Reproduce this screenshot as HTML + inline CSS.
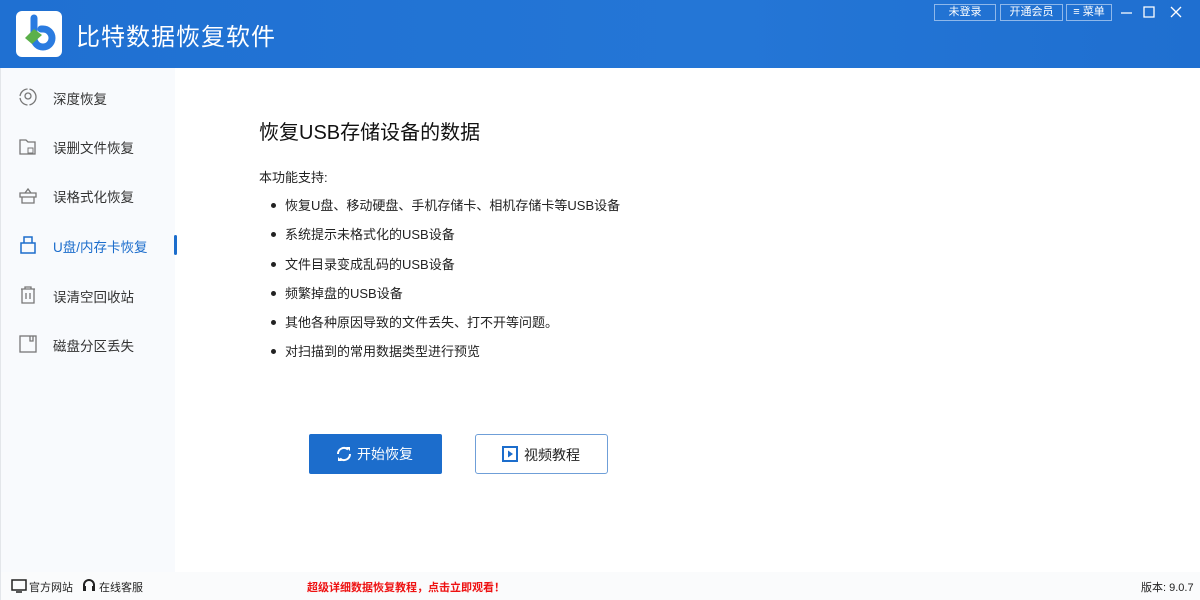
<!DOCTYPE html>
<html><head><meta charset="utf-8"><style>
*{margin:0;padding:0;box-sizing:border-box}
body{width:1200px;height:600px;overflow:hidden;background:#fff;font-family:"Liberation Sans","Noto Sans CJK SC",sans-serif;position:relative;color:#222}
.hdr{position:absolute;left:0;top:0;width:1200px;height:68px;background:linear-gradient(90deg,#1f70d2,#2476d6 60%,#1f6fd0)}
.logo{position:absolute;left:16px;top:11px;width:46px;height:46px;background:#fff;border-radius:6px}
.title{position:absolute;left:76px;top:17px;color:#fff;font-size:24px;letter-spacing:1px}
.tb{position:absolute;top:4px;height:17px;border:1px solid #8fb8ea;color:#fff;font-size:11px;line-height:15px;text-align:center}
.side{position:absolute;left:0;top:68px;width:175px;height:504px;background:#f8fafd;border-left:1px solid #e3e6ea}
.it{position:absolute;left:52px;font-size:13.5px;color:#333}
.ic{position:absolute;left:17px;width:20px;height:20px}
.bot{position:absolute;left:0;top:572px;width:1200px;height:28px;background:#fafbfc;border-left:1px solid #e3e6ea;font-size:11px;color:#222}
h1{position:absolute;left:259px;top:116px;font-size:20px;font-weight:normal;color:#111}
.sub{position:absolute;left:259px;top:167px;font-size:13px;color:#222}
.li{position:absolute;left:271px;font-size:13px;color:#222}
.li:before{content:"";position:absolute;left:0;top:8px;width:5px;height:5px;border-radius:50%;background:#222}
.li span{margin-left:14px}
.b1{position:absolute;left:309px;top:434px;width:133px;height:40px;background:#1c6dcc;color:#fff;font-size:14px;border-radius:2px}
.b2{position:absolute;left:475px;top:434px;width:133px;height:40px;border:1px solid #6f9fd8;border-radius:3px;background:#fff;font-size:14px;color:#222}
</style></head><body>
<div class="hdr">
<div class="logo"><svg width="46" height="46"><path d="M18 7v20a9 9 0 1 0 9-9h-2" fill="none" stroke="#2a7be0" stroke-width="7" stroke-linecap="round"/><path d="M9 27l9-9 8 6-10 9z" fill="#5bb04a"/></svg></div>
<div class="title">比特数据恢复软件</div>
<div class="tb" style="left:934px;width:62px">未登录</div>
<div class="tb" style="left:1000px;width:63px">开通会员</div>
<div class="tb" style="left:1066px;width:46px">≡ 菜单</div>
<svg style="position:absolute;left:1118px;top:5px" width="80" height="16"><path d="M3 8h11M26 2h10v10h-10zM53 2l10 10M63 2l-10 10" stroke="#fff" stroke-width="1.3" fill="none"/></svg>
</div>
<div class="side">
<svg class="ic" style="top:19px" viewBox="0 0 20 20"><circle cx="10" cy="10" r="8" fill="none" stroke="#777" stroke-width="1.3" stroke-dasharray="11 2"/><circle cx="10" cy="9" r="3" fill="none" stroke="#777" stroke-width="1.3"/></svg>
<div class="it" style="top:20px">深度恢复</div>
<svg class="ic" style="top:69px" viewBox="0 0 20 20"><path d="M2 3h6l2 2h7v12H2z" fill="none" stroke="#777" stroke-width="1.3"/><rect x="10" y="11" width="5" height="5" fill="none" stroke="#777"/></svg>
<div class="it" style="top:69px">误删文件恢复</div>
<svg class="ic" style="top:118px" viewBox="0 0 20 20"><path d="M2 7h16v4H2zM4 11v6h12v-6M7 7l3-4 3 4" fill="none" stroke="#777" stroke-width="1.3"/></svg>
<div class="it" style="top:118px">误格式化恢复</div>
<svg class="ic" style="top:167px" viewBox="0 0 20 20"><path d="M6 2h8v6H6zM3 8h14v10H3z" fill="none" stroke="#1c6dcc" stroke-width="1.5"/></svg>
<div class="it" style="top:168px;color:#1c6dcc">U盘/内存卡恢复</div>
<div style="position:absolute;left:173px;top:167px;width:3px;height:20px;background:#1c6dcc;border-radius:2px"></div>
<svg class="ic" style="top:217px" viewBox="0 0 20 20"><path d="M3 4h14M7 4V2h6v2M4 4v14h12V4M8 8v6M12 8v6" fill="none" stroke="#777" stroke-width="1.3"/></svg>
<div class="it" style="top:218px">误清空回收站</div>
<svg class="ic" style="top:266px" viewBox="0 0 20 20"><rect x="2" y="2" width="16" height="16" fill="none" stroke="#777" stroke-width="1.3"/><path d="M12 2v5h3V2" fill="none" stroke="#777" stroke-width="1.3"/></svg>
<div class="it" style="top:267px">磁盘分区丢失</div>
</div>
<h1>恢复USB存储设备的数据</h1>
<div class="sub">本功能支持:</div>
<div class="li" style="top:195px"><span>恢复U盘、移动硬盘、手机存储卡、相机存储卡等USB设备</span></div>
<div class="li" style="top:224px"><span>系统提示未格式化的USB设备</span></div>
<div class="li" style="top:254px"><span>文件目录变成乱码的USB设备</span></div>
<div class="li" style="top:283px"><span>频繁掉盘的USB设备</span></div>
<div class="li" style="top:312px"><span>其他各种原因导致的文件丢失、打不开等问题。</span></div>
<div class="li" style="top:341px"><span>对扫描到的常用数据类型进行预览</span></div>
<div class="b1"><svg style="position:absolute;left:27px;top:12px" width="16" height="16" viewBox="0 0 16 16"><path d="M2 8a6 6 0 0 1 10-4.5M14 8a6 6 0 0 1-10 4.5" fill="none" stroke="#fff" stroke-width="2"/><path d="M10 1h4v4zM6 15H2v-4z" fill="#fff"/></svg><span style="position:absolute;left:48px;top:10px">开始恢复</span></div>
<div class="b2"><svg style="position:absolute;left:26px;top:11px" width="16" height="16"><rect x="1" y="1" width="14" height="14" fill="none" stroke="#1c6dcc" stroke-width="2"/><path d="M6 4.5l5 3.5-5 3.5z" fill="#1c6dcc"/></svg><span style="position:absolute;left:48px;top:10px">视频教程</span></div>
<div class="bot">
<svg style="position:absolute;left:10px;top:7px" width="16" height="14"><rect x="1" y="1" width="14" height="10" fill="none" stroke="#222" stroke-width="1.5"/><path d="M5 13h6" stroke="#222" stroke-width="1.5"/></svg>
<span style="position:absolute;left:28px;top:7px">官方网站</span>
<svg style="position:absolute;left:81px;top:6px" width="14" height="16"><path d="M2 10V7a5 5 0 0 1 10 0v3" fill="none" stroke="#222" stroke-width="2"/><rect x="1" y="8" width="3" height="5" fill="#222"/><rect x="10" y="8" width="3" height="5" fill="#222"/></svg>
<span style="position:absolute;left:98px;top:7px">在线客服</span>
<span style="position:absolute;left:306px;top:7px;color:#e11;font-weight:bold">超级详细数据恢复教程，点击立即观看！</span>
<span style="position:absolute;left:1140px;top:7px">版本: 9.0.7</span>
</div>
</body></html>
